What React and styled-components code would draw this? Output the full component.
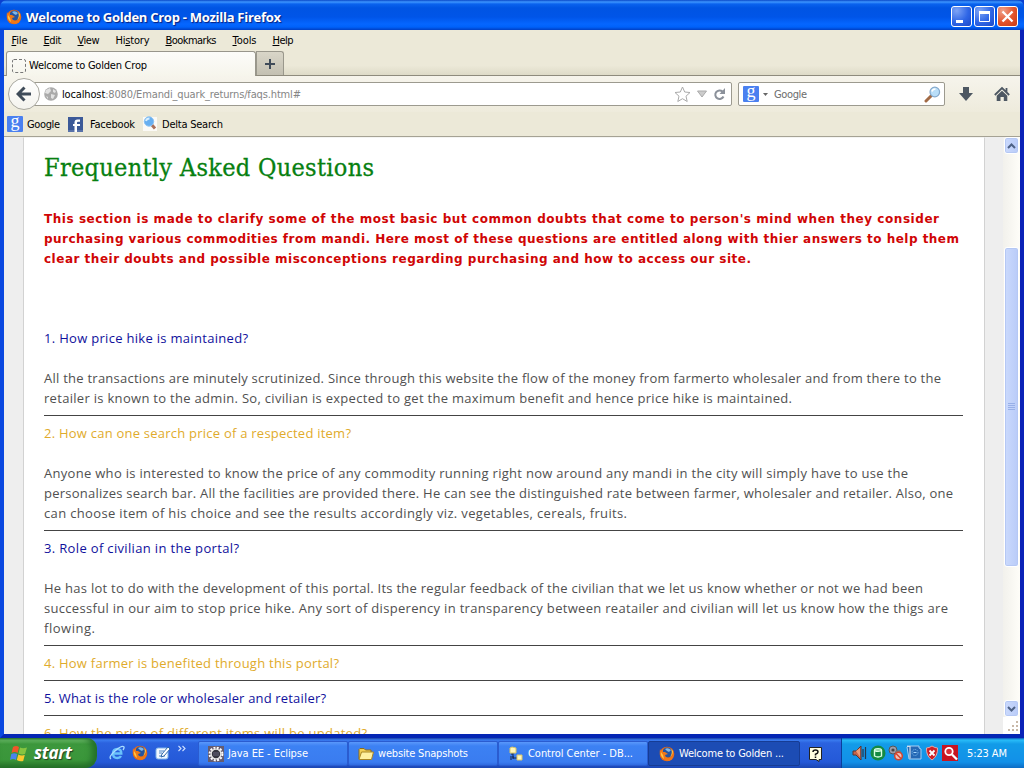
import React, { useLayoutEffect, useRef, useState } from "react";
import styled, { createGlobalStyle, css } from "styled-components";

const Global = createGlobalStyle`
  * { box-sizing: border-box; }
  body { margin: 0; overflow: hidden; background: #0a3fd0; }
  svg { display: block; flex: none; }
`;

const ui = `"DejaVu Sans Condensed", "DejaVu Sans", Tahoma, sans-serif`;
const body = `"Open Sans", "Noto Sans", sans-serif`;

const Desktop = styled.div`
  width: 1024px;
  height: 768px;
  display: flex;
  flex-direction: column;
  overflow: hidden;
  font: 11px/14px ${ui};
  color: #000;
`;

const Span = styled.span`
  display: inline-block;
  white-space: pre;
  flex: none;
`;

/* Text tracked so that it fills the given width. */
function Fit({ w, children, ...rest }) {
  const ref = useRef(null);
  const [gap, setGap] = useState(0);
  useLayoutEffect(() => {
    const natural = ref.current.getBoundingClientRect().width;
    setGap((w - natural) / (ref.current.textContent.length - 1));
  }, [w]);
  return (
    <Span ref={ref} style={{ letterSpacing: gap, marginRight: -gap }} {...rest}>
      {children}
    </Span>
  );
}

const TitleBar = styled.header`
  height: 30px;
  display: flex;
  align-items: center;
  padding: 3px 6px 0 6px;
  background: linear-gradient(#0a48c8 0, #3d95ff 2px, #0a62ee 4px, #0054e3 8px, #0055e8 17px, #0566ff 24px, #0062fa 27px, #003fc4 30px);
  border-radius: 7px 7px 0 0;
`;
const Title = styled.div`
  flex: 1;
  margin-left: 4px;
  padding-top: 1px;
  font: bold 13px/18px ${body};
  color: #fff;
  text-shadow: 1px 1px 1px #0a1f7c;
`;
const WinButtons = styled.div`
  display: flex;
  gap: 2px;
`;
const WinButton = styled.div`
  width: 21px;
  height: 21px;
  border: 1px solid #fff;
  border-radius: 3px;
  background: ${(p) =>
    p.$close
      ? "radial-gradient(circle at 25% 20%, #f0a088, #e2532c 55%, #c83a12)"
      : "radial-gradient(circle at 25% 20%, #7ea4f5, #2f66e6 55%, #1c48c8)"};
`;

const Frame = styled.main`
  height: 708px;
  display: flex;
  flex-direction: column;
  border: solid #0a3fdc;
  border-width: 0 4px 4px;
  border-color: #0831d9 #0a22b8 #0426b4 #0a48e0;
  background: #ece9d8;
`;
const MenuBar = styled.nav`
  height: 21px;
  display: flex;
  align-items: center;
  padding-left: 7.5px;
`;
const MenuItem = styled.div`
  width: ${(p) => p.$w}px;
  height: 14px;
  u { text-underline-offset: 1px; }
`;
const TabStrip = styled.div`
  height: 25px;
  display: flex;
  padding-left: 2px;
  background: linear-gradient(#ece9d8 60%, #dedbc8);
  border-bottom: 1px solid #8e8b7d;
`;
const Tab = styled.div`
  width: 250px;
  height: 25px;
  display: flex;
  align-items: center;
  gap: 3px;
  padding: 3px 0 0 5px;
  border: 1px solid #98968b;
  border-bottom: 0;
  border-radius: 3px 3px 0 0;
  background: linear-gradient(#fcfcf9, #f6f5ec);
`;
const NewTab = styled.div`
  width: 28px;
  height: 24px;
  display: flex;
  align-items: center;
  justify-content: center;
  border: 1px solid #9a988c;
  border-bottom: 0;
  border-radius: 0 3px 0 0;
  background: linear-gradient(#d9d6c8, #c3c0b2);
`;
const NavBar = styled.div`
  height: 36px;
  display: flex;
  align-items: center;
  padding-left: 4px;
  background: linear-gradient(#f6f4ec, #eeebdc);
`;
const Back = styled.div`
  z-index: 1;
  width: 32px;
  height: 32px;
  display: flex;
  align-items: center;
  justify-content: center;
  border: 1px solid #a9a8a0;
  border-radius: 50%;
  background: linear-gradient(#fff, #f4f3ee);
`;
const Field = styled.div`
  height: 24px;
  display: flex;
  align-items: center;
  border: 1px solid #9c9a8f;
  border-radius: 2px;
  background: #fff;
`;
const UrlField = styled(Field)`
  width: 700px;
  margin-left: -8px;
  padding-left: 11px;
`;
const Url = styled.div`
  flex: 1;
  margin-left: 4px;
  padding-top: 2px;
  color: #858585;
  b { font-weight: normal; color: #000; }
`;
const SearchField = styled(Field)`
  width: 207px;
  margin-left: 6px;
  padding: 0 3px 0 4px;
`;
const Hint = styled.div`
  flex: 1;
  margin-left: 3px;
  padding-top: 2px;
  color: #6c6c6c;
`;
const UrlTools = styled.div`
  display: flex;
  align-items: center;
  gap: 6px;
  padding-right: 5px;
`;
const NavTools = styled.div`
  display: flex;
  align-items: center;
  gap: 20px;
  margin-left: 13px;
`;
const Bookmarks = styled.div`
  height: 25px;
  display: flex;
  align-items: center;
  padding-left: 3px;
  border-bottom: 1px solid #a5a294;
`;
const Bookmark = styled.div`
  display: flex;
  align-items: center;
  gap: ${(p) => p.$gap}px;
  width: ${(p) => p.$w}px;
`;
const BookmarkName = styled.div`
  padding-top: 2px;
`;
const GBadge = styled.div`
  width: 16px;
  height: 16px;
  flex: none;
  background: #4a80f0;
  border-radius: 1px;
  color: #fff;
  text-align: center;
  font: 18px/11px "Liberation Serif", serif;
`;

const Viewport = styled.section`
  flex: 1;
  min-height: 0;
  display: flex;
  background: #eee;
  overflow: hidden;
`;
const Page = styled.article`
  width: 962px;
  margin-left: 19px;
  padding: 15px 0 0 20px;
  overflow: hidden;
  background: #fff;
  border: solid #d2d2d2;
  border-width: 1px 1px 0;
  border-top-color: #f4f4f2;
  font: 13px/20px ${body};
  color: #505050;
`;
const Heading = styled.h1`
  height: 56px;
  margin: 0;
  font: normal 25px/30px "DejaVu Serif Condensed", "DejaVu Serif", serif;
  -webkit-text-stroke: 0.3px #078010;
  color: #078010;
`;
const Line = styled.div`
  height: 20px;
`;
const Intro = styled.div`
  height: 119px;
  font: bold 12px/20px "DejaVu Sans", sans-serif;
  color: #d00505;
`;
const Question = styled.div`
  height: 20px;
  color: ${(p) => (p.$gold ? "#dfab2c" : "#10109c")};
`;
const Answer = styled.div`
  padding-top: 20px;
`;
const Rule = styled.div`
  width: 919px;
  height: 15px;
  padding-top: 7px;
  &::after {
    content: "";
    display: block;
    height: 1px;
    background: #444;
  }
`;
const ScrollBar = styled.div`
  width: 17px;
  margin-left: auto;
  display: flex;
  flex-direction: column;
  align-items: center;
  background: linear-gradient(90deg, #f2f1ec, #fefdf8);
`;
const scrollPart = css`
  width: 15px;
  border: 1px solid #fff;
  border-radius: 3px;
  box-shadow: inset 0 0 0 1px #b5c8f4;
  background: linear-gradient(90deg, #cbdafd, #b9cbf8);
  display: flex;
  align-items: center;
  justify-content: center;
`;
const ScrollButton = styled.div`
  ${scrollPart}
  height: 17px;
`;
const Track = styled.div`
  flex: 1;
  padding-top: 93px;
`;
const Thumb = styled.div`
  ${scrollPart}
  height: 320px;
`;
const Corner = styled.div`
  width: 17px;
  height: 17px;
  background: #fff;
`;

const TaskBar = styled.footer`
  height: 30px;
  display: flex;
  background: linear-gradient(#1941a5 0, #3a7cf0 2px, #2b62df 5px, #2459d8 24px, #1b46b2 30px);
  color: #fff;
`;
const Start = styled.div`
  width: 97px;
  display: flex;
  align-items: center;
  gap: 6px;
  padding-left: 10px;
  border-radius: 0 10px 12px 0;
  background: linear-gradient(#2b722b 0, #6bbd68 2px, #3d983d 6px, #3a963a 22px, #256f26 30px);
  box-shadow: inset -5px 0 6px #23702a;
  font: italic bold 17px/24px "Open Sans", sans-serif;
  text-shadow: 1px 1px 1px #223f22;
`;
const QuickLaunch = styled.div`
  width: 101px;
  display: flex;
  align-items: center;
  gap: 7px;
  padding-left: 12px;
`;
const Task = styled.div`
  width: ${(p) => (p.$active ? 152 : 150)}px;
  height: 25px;
  margin-top: 3px;
  display: flex;
  align-items: center;
  gap: 4px;
  padding-left: ${(p) => (p.$active ? 10 : 9)}px;
  border: 1px solid ${(p) => (p.$active ? "#163c94" : "#2a5cd0")};
  border-radius: 2px;
  background: ${(p) =>
    p.$active ? "#1c4cb4" : "linear-gradient(#5a98fb 0, #3c81f3 4px, #3a7cf0 20px, #2f6ae0)"};
`;
const HelpSlot = styled.div`
  width: 41px;
  display: flex;
  align-items: center;
  padding: 2px 0 0 9px;
`;
const Tray = styled.div`
  flex: 1;
  display: flex;
  align-items: center;
  gap: 2px;
  padding-left: 10px;
  border-left: 1px solid #0a3f9c;
  background: linear-gradient(#0c59b9 0, #28bcf8 2px, #129be8 6px, #1290e8 24px, #0d6cc4 30px);
`;
const Clock = styled.div`
  margin-left: 7px;
  padding-top: 2px;
`;

const Firefox = ({ s = 16 }) => (
  <svg width={s} height={s} viewBox="0 0 16 16">
    <circle cx="8" cy="8" r="7.3" fill="#e66a16" />
    <circle cx="8.3" cy="6.6" r="5" fill="#2454a0" />
    <path d="M6 3Q9 1 12 4L10 6 8 5Z" fill="#80b8e8" />
    <path d="M1 3Q0 9 3 12T10 15Q15 13 15 6 14 12 9 12 6 11 6 9L9 8 6 6 4 6 4 3 2 5Z" fill="#ef7818" />
    <path d="M12 3Q14 7 11 11 14 9 14 5ZM2 6Q1 10 5 13L4 9Z" fill="#ffc543" />
  </svg>
);
const Facebook = () => (
  <svg width="15" height="15" viewBox="0 0 15 15">
    <rect width="15" height="15" fill="#3b5998" />
    <path d="M0 13h15v2H0Z" fill="#6d84b4" opacity=".6" />
    <path d="M9 15V9h3V7H9V5.8Q9 4.8 10 4.8h2V2.5H9.5Q6.5 2.5 6.5 5.4V7H5v2h1.5v6Z" fill="#fff" />
  </svg>
);
const SearchGlass = () => (
  <svg width="17" height="17" viewBox="0 0 17 17">
    <path d="M7.500 9.500L2 15" stroke="#a26a45" strokeWidth="3" strokeLinecap="round" />
    <circle cx="10.800" cy="6" r="4.800" fill="#b9def8" stroke="#84a9cc" strokeWidth="1.2" />
    <path d="M8 5.500Q8.500 3 11.500 3" stroke="#fff" strokeWidth="1.6" fill="none" />
  </svg>
);
const DeltaGlass = () => (
  <svg width="17" height="17" viewBox="0 0 17 17">
    <rect x="1" y="1" width="14" height="14" fill="#fbfaf6" />
    <path d="M9.500 8.500l3.500 4" stroke="#a9705a" strokeWidth="3" />
    <circle cx="7" cy="5.500" r="4.700" fill="#67aff0" stroke="#8dc3f2" />
    <path d="M4 5Q4.500 2.500 7.500 2.500" stroke="#d8efff" strokeWidth="1.800" fill="none" />
  </svg>
);
const Globe = () => (
  <svg width="14" height="14" viewBox="0 0 14 14">
    <circle cx="7" cy="7" r="6.8" fill="#aaa" />
    <path d="M2 3L6 1 7 4 4 7 1 6ZM9 2L12 4 11 6 9 5ZM7 7L11 8 9 12 7 11ZM2 9L4 10 4 12Z" fill="#e2e2e2" />
  </svg>
);
const Arrow = ({ up }) => (
  <svg width="9" height="6" viewBox="0 0 9 6">
    <path d={up ? "M1 5L4.5 1.5 8 5" : "M1 1L4.5 4.5 8 1"} fill="none" stroke="#4d6185" strokeWidth="2" />
  </svg>
);
const Grip = () => (
  <svg width="17" height="17" viewBox="0 0 17 17" fill="#c8b8a8">
    {[[13, 4], [9, 8], [13, 8], [5, 12], [9, 12], [13, 12]].map(([x, y]) => (
      <rect key={x + "-" + y} x={x} y={y} width="2" height="2" />
    ))}
  </svg>
);
const Flag = () => (
  <svg width="18" height="17" viewBox="0 0 18 17">
    <path d="M3 2Q6 0 9 2L7.6 8Q5 6 1.5 8Z" fill="#f0562a" />
    <path d="M10 2.5Q13 4 17 2.5L15 9Q12 10 8.5 8.4Z" fill="#86c440" />
    <path d="M1.3 9Q4 7.5 7.2 9L6 15Q3 13 0 15Z" fill="#4b83ee" />
    <path d="M8.3 9.4Q11 11 14.8 10L13.2 16Q10 17 6.8 15Z" fill="#fbc82e" />
  </svg>
);
const Explorer = () => (
  <svg width="16" height="16" viewBox="0 0 16 16" fill="none">
    <path d="M4 8.500H12.300Q12.300 4 8.300 4 4 4 4 8.700 4 13 8.300 13 11 13 12 11" stroke="#69c2fb" strokeWidth="2.4" />
    <path d="M2 14Q-1 12 6 6T15 2Q15.500 3 14 5" stroke="#a8dcff" strokeWidth="1.3" />
  </svg>
);
const ShowDesktop = () => (
  <svg width="16" height="16" viewBox="0 0 16 16">
    <rect x="1" y="3" width="12" height="11" rx="2" fill="#f3f8ff" stroke="#7fb2e8" />
    <path d="M4 6h5M4 8h3M4 11h6" stroke="#4f88c8" />
    <path d="M7 9L13 2 15 4 9 11 6 12Z" fill="#fff" stroke="#2f68a8" />
  </svg>
);
const More = () => (
  <svg width="8" height="18" viewBox="0 0 8 18">
    <path d="M.5 2L3 4.500.5 7M4.500 2L7 4.500 4.500 7" fill="none" stroke="#cfe0ff" strokeWidth="1.1" />
  </svg>
);
const Gear = () => (
  <svg width="16" height="16" viewBox="0 0 16 16">
    <rect width="16" height="16" fill="#655c70" />
    <circle cx="8" cy="8" r="6.4" fill="none" stroke="#fff" strokeWidth="2" strokeDasharray="2 1.35" />
    <circle cx="8" cy="8" r="4.9" fill="#343440" stroke="#e8e8e8" strokeWidth="1.4" />
    <path d="M5 7h6M5 9h6" stroke="#67647c" />
  </svg>
);
const Folder = () => (
  <svg width="16" height="16" viewBox="0 0 16 16">
    <path d="M1 13V3.500L2 2.500H6L7.500 4H13V6" fill="#f2cf55" stroke="#8d6d1c" />
    <path d="M1 13.500L3.500 6H15.500L13.500 13.500Z" fill="#fff0a0" stroke="#a88525" />
  </svg>
);
const Database = () => (
  <svg width="16" height="16" viewBox="0 0 16 16">
    <path d="M5 6v6h5M5 8H3" fill="none" stroke="#17284c" />
    <path d="M2 2l2-1 4 1v5H2Z" fill="#fff7bc" stroke="#d8c568" />
    <path d="M9 9h5v5H9Z" fill="#fff7bc" stroke="#d8c568" />
    <path d="M3 10v4M5 10v3" stroke="#17284c" />
  </svg>
);
const Speaker = () => (
  <svg width="16" height="16" viewBox="0 0 16 16">
    <path d="M1 6h3l5-5v14L4 10H1Z" fill="#c8644a" stroke="#5a3430" />
    <path d="M4 6l4-3v9Z" fill="#ee9c78" />
    <path d="M11 4v8M13.500 2v12" stroke="#27364c" strokeWidth="1.2" />
  </svg>
);
const DiskOk = () => (
  <svg width="16" height="16" viewBox="0 0 16 16">
    <circle cx="8" cy="8" r="7.5" fill="#138a43" />
    <path d="M4.500 5v6Q8 13 11.500 11V5" fill="none" stroke="#d8ffe6" strokeWidth="1.4" />
    <ellipse cx="8" cy="5" rx="3.500" ry="1.4" fill="#7cc89a" stroke="#d8ffe6" strokeWidth="1.2" />
  </svg>
);
const Muted = () => (
  <svg width="16" height="16" viewBox="0 0 16 16">
    <circle cx="5" cy="5" r="4" fill="#9b9caa" stroke="#555" />
    <circle cx="5" cy="5" r="1.6" fill="#444" />
    <path d="M7 6l5-1 2 4-4 3Z" fill="#777" />
    <circle cx="10.500" cy="11" r="3.8" fill="#f0c0b8" stroke="#d0442f" strokeWidth="1.500" />
    <path d="M8 8.500l5 5" stroke="#d0442f" strokeWidth="1.500" />
  </svg>
);
const Chip = () => (
  <svg width="16" height="16" viewBox="0 0 16 16">
    <path d="M1 1h12v2l2 1v10H3L1 2" fill="#2468b4" stroke="#a6d0f4" />
    <path d="M1 1.500h3v12" fill="none" stroke="#d2dce8" strokeWidth="1.2" />
    <circle cx="9" cy="7.500" r="3" fill="none" stroke="#83c0f4" strokeDasharray="1 1" />
    <path d="M7.500 7.500h3" stroke="#a6d8ff" />
  </svg>
);
const Shield = () => (
  <svg width="16" height="16" viewBox="0 0 16 16">
    <path d="M8 1Q11 3 13.500 3 14 11 8 15 2 11 2.500 3 5 3 8 1Z" fill="#cf2026" stroke="#e8a8a8" />
    <path d="M5.500 5.500l5 5M10.500 5.500l-5 5" stroke="#fff" strokeWidth="1.8" />
  </svg>
);
const RedLens = () => (
  <svg width="16" height="16" viewBox="0 0 16 16">
    <rect width="16" height="16" fill="#c81420" />
    <circle cx="7" cy="6.500" r="3.700" fill="#d83038" stroke="#fff" strokeWidth="1.8" />
    <path d="M10 9.500l5 5" stroke="#fff" strokeWidth="2.3" />
  </svg>
);

const menu = [
  ["F", "ile", 32, 16, ""],
  ["E", "dit", 34, 18, ""],
  ["V", "iew", 38, 22, ""],
  ["s", "tory", 50, 34, "Hi"],
  ["B", "ookmarks", 67, 51, ""],
  ["T", "ools", 40, 24, ""],
  ["H", "elp", 40, 21, ""],
];

const faqs = [
  {
    q: ["1. How price hike is maintained?", 204],
    a: [
      ["All the transactions are minutely scrutinized. Since through this website the flow of the money from farmerto wholesaler and from there to the", 897],
      ["retailer is known to the admin. So, civilian is expected to get the maximum benefit and hence price hike is maintained.", 748],
    ],
  },
  {
    q: ["2. How can one search price of a respected item?", 307],
    a: [
      ["Anyone who is interested to know the price of any commodity running right now around any mandi in the city will simply have to use the", 864],
      ["personalizes search bar. All the facilities are provided there. He can see the distinguished rate between farmer, wholesaler and retailer. Also, one", 909],
      ["can choose item of his choice and see the results accordingly viz. vegetables, cereals, fruits.", 583],
    ],
  },
  {
    q: ["3. Role of civilian in the portal?", 195],
    a: [
      ["He has lot to do with the development of this portal. Its the regular feedback of the civilian that we let us know whether or not we had been", 879],
      ["successful in our aim to stop price hike. Any sort of disperency in transparency between reatailer and civilian will let us know how the thigs are", 904],
      ["flowing.", 51],
    ],
  },
  { q: ["4. How farmer is benefited through this portal?", 295] },
  { q: ["5. What is the role or wholesaler and retailer?", 282] },
  { q: ["6. How the price of different items will be updated?", 323] },
];

export default function App() {
  return (
    <Desktop>
      <Global />
      <TitleBar>
        <Firefox />
        <Title>
          <Fit w={255}>Welcome to Golden Crop - Mozilla Firefox</Fit>
        </Title>
        <WinButtons>
          <WinButton>
            <svg width="19" height="19"><path d="M4 13h7v3H4Z" fill="#fff" /></svg>
          </WinButton>
          <WinButton>
            <svg width="19" height="19"><path d="M4.500 5h10v9.500h-10Z" fill="none" stroke="#fff" /><path d="M4 4h11v3H4Z" fill="#fff" /></svg>
          </WinButton>
          <WinButton $close>
            <svg width="19" height="19"><path d="M4.500 4.500l10 10M14.500 4.500l-10 10" stroke="#fff" strokeWidth="2.3" /></svg>
          </WinButton>
        </WinButtons>
      </TitleBar>
      <Frame>
        <MenuBar>
          {menu.map(([key, tail, w, textW, head]) => (
            <MenuItem key={key + tail} $w={w}>
              <Fit w={textW}>{head}<u>{key}</u>{tail}</Fit>
            </MenuItem>
          ))}
        </MenuBar>
        <TabStrip>
          <Tab>
            <svg width="14" height="14"><rect x=".5" y=".5" width="13" height="13" rx="1.500" fill="none" stroke="#777" strokeDasharray="3 2" /></svg>
            <Fit w={118}>Welcome to Golden Crop</Fit>
          </Tab>
          <NewTab>
            <svg width="10" height="10"><path d="M5 0v10M0 5h10" stroke="#3f4b59" strokeWidth="2" /></svg>
          </NewTab>
        </TabStrip>
        <NavBar>
          <Back>
            <svg width="16" height="16" viewBox="0 0 16 16"><path d="M8.500 1.500L2 8l6.500 6.500M2.500 8H15" fill="none" stroke="#3f4b59" strokeWidth="3" /></svg>
          </Back>
          <UrlField>
            <Globe />
            <Url>
              <Fit w={239}><b>localhost</b>:8080/Emandi_quark_returns/faqs.html#</Fit>
            </Url>
            <UrlTools>
              <svg width="17" height="17" viewBox="0 0 17 17"><path d="M8.500 1l2.200 5 5.300.5-4 3.700 1.200 5.300-4.700-2.800-4.700 2.800L5 10.200 1 6.500 6.300 6Z" fill="#fff" stroke="#aaa" /></svg>
              <svg width="10" height="8"><path d="M.5 1h9L5 7Z" fill="#ccc" stroke="#aaa" /></svg>
              <svg width="13" height="13" viewBox="0 0 13 13"><path d="M9.500 3.500A4.300 4.300 0 1 0 10.500 8.500" fill="none" stroke="#8b919a" strokeWidth="2" /><path d="M12 0v6H6.500Z" fill="#8b919a" /></svg>
            </UrlTools>
          </UrlField>
          <SearchField>
            <GBadge>g</GBadge>
            <svg width="12" height="5"><path d="M4 1h5L6.500 4Z" fill="#666" /></svg>
            <Hint><Fit w={33}>Google</Fit></Hint>
            <SearchGlass />
          </SearchField>
          <NavTools>
            <svg width="16" height="16" viewBox="0 0 16 16"><path d="M5 1h6v6h4l-7 8-7-8h4Z" fill="#4d5762" /></svg>
            <svg width="16" height="16" viewBox="0 0 16 16">
              <path d="M.8 9L8 2l7.200 7M12.500 2v4" fill="none" stroke="#4d5762" strokeWidth="1.800" />
              <path d="M2.700 9.800L8 4.800l5.300 5V15H9.800v-4H6.500v4H2.700Z" fill="#4d5762" />
            </svg>
          </NavTools>
        </NavBar>
        <Bookmarks>
          <Bookmark $gap={4} $w={61}><GBadge>g</GBadge><BookmarkName><Fit w={33}>Google</Fit></BookmarkName></Bookmark>
          <Bookmark $gap={7} $w={74}><Facebook /><BookmarkName><Fit w={45}>Facebook</Fit></BookmarkName></Bookmark>
          <Bookmark $gap={3} $w={90}><DeltaGlass /><BookmarkName><Fit w={61}>Delta Search</Fit></BookmarkName></Bookmark>
        </Bookmarks>
        <Viewport>
          <Page>
            <Heading><Fit w={330}>Frequently Asked Questions</Fit></Heading>
            <Intro>
              <Line><Fit w={895}>This section is made to clarify some of the most basic but common doubts that come to person's mind when they consider</Fit></Line>
              <Line><Fit w={915}>purchasing various commodities from mandi. Here most of these questions are entitled along with thier answers to help them</Fit></Line>
              <Line><Fit w={707}>clear their doubts and possible misconceptions regarding purchasing and how to access our site.</Fit></Line>
            </Intro>
            {faqs.map(({ q, a }, i) => (
              <React.Fragment key={q[0]}>
                <Question $gold={i % 2 === 1}><Fit w={q[1]}>{q[0]}</Fit></Question>
                {a && (
                  <Answer>
                    {a.map(([text, w]) => (
                      <Line key={text}><Fit w={w}>{text}</Fit></Line>
                    ))}
                  </Answer>
                )}
                {i < 5 && <Rule />}
              </React.Fragment>
            ))}
          </Page>
          <ScrollBar>
            <ScrollButton><Arrow up /></ScrollButton>
            <Track>
              <Thumb>
                <svg width="7" height="8"><path d="M0 .5h7M0 2.500h7M0 4.500h7M0 6.500h7" stroke="#98b0e8" /></svg>
              </Thumb>
            </Track>
            <ScrollButton><Arrow /></ScrollButton>
            <Corner><Grip /></Corner>
          </ScrollBar>
        </Viewport>
      </Frame>
      <TaskBar>
        <Start><Flag /><Fit w={38}>start</Fit></Start>
        <QuickLaunch>
          <Explorer /><Firefox /><ShowDesktop /><More />
        </QuickLaunch>
        <Task><Gear /><Fit w={80}>Java EE - Eclipse</Fit></Task>
        <Task><Folder /><Fit w={90}>website Snapshots</Fit></Task>
        <Task><Database /><Fit w={105}>Control Center - DB...</Fit></Task>
        <Task $active><Firefox /><Fit w={105}>Welcome to Golden ...</Fit></Task>
        <HelpSlot>
          <svg width="13" height="15" viewBox="0 0 13 15"><path d="M.5.5h12v12H10v2l-3-2H.5Z" fill="#fffde0" stroke="#222" /><path d="M4 5Q4 3 6.500 3T9 5Q9 6.500 6.500 7.300V8.500M6.500 9.500v1.500" fill="none" stroke="#111" strokeWidth="1.500" /></svg>
        </HelpSlot>
        <Tray>
          <Speaker /><DiskOk /><Muted /><Chip /><Shield /><RedLens />
          <Clock><Fit w={40}>5:23 AM</Fit></Clock>
        </Tray>
      </TaskBar>
    </Desktop>
  );
}
